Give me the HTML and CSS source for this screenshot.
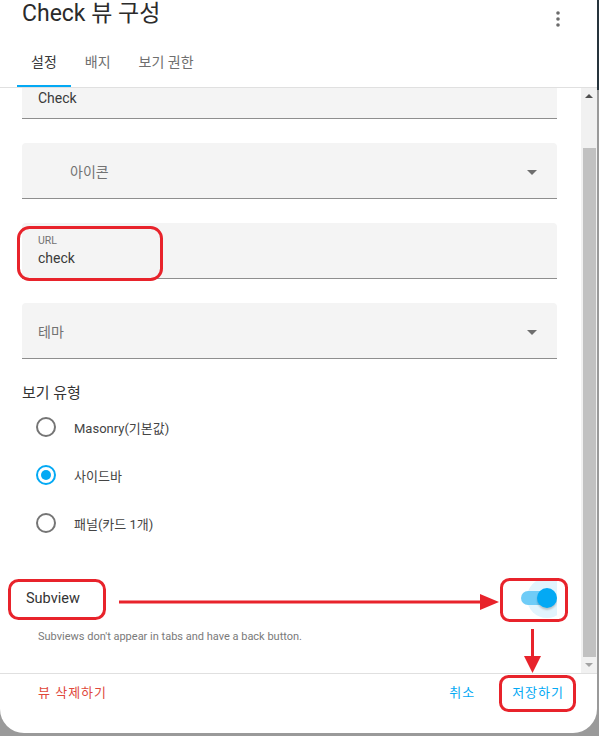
FILE: index.html
```html
<!DOCTYPE html>
<html>
	<head>
		<meta charset="utf-8">
		<title>Check 뷰 구성</title>
		<link rel="stylesheet" href="styles.css">
	</head>
	<body>
		<div class="dialog">
			<div class="head">
				<div class="title-row">
					<h2 class="title">Check 뷰 구성</h2>
					<svg class="menu" width="6" height="18" viewBox="0 0 6 18">
						<circle cx="3" cy="3" r="1.8" />
						<circle cx="3" cy="9" r="1.8" />
						<circle cx="3" cy="15" r="1.8" />
					</svg>
				</div>
				<div class="tabs">
					<div class="tab active">설정</div>
					<div class="tab">배지</div>
					<div class="tab">보기 권한</div>
				</div>
			</div>

			<div class="body">
				<div class="scroll">
					<div class="inner">
						<div class="field labeled first">
							<span class="label"></span>
							<span class="value">Check</span>
						</div>
						<div class="field select with-icon">
							<span class="placeholder">아이콘</span>
							<span class="arrow"></span>
						</div>
						<div class="field labeled">
							<span class="label">URL</span>
							<span class="value">check</span>
						</div>
						<div class="field select">
							<span class="placeholder">테마</span>
							<span class="arrow"></span>
						</div>

						<div class="group-title">보기 유형</div>
						<div class="radios">
							<div class="radio"><span class="ring"></span>Masonry(기본값)</div>
							<div class="radio on"><span class="ring"></span>사이드바</div>
							<div class="radio"><span class="ring"></span>패널(카드 1개)</div>
						</div>

						<div class="sub-row">
							<span class="sub-label">Subview</span>
							<span class="switch"><span class="halo"></span><span class="track"></span><span class="thumb"></span></span>
						</div>
						<div class="helper">Subviews don't appear in tabs and have a back button.</div>
					</div>
				</div>
				<div class="scrollbar">
					<span class="sb-up"></span>
					<div class="sb-track"><div class="sb-thumb"></div></div>
					<span class="sb-down"></span>
				</div>
			</div>

			<div class="foot">
				<a class="btn danger">뷰 삭제하기</a>
				<span class="spacer"></span>
				<a class="btn">취소</a>
				<a class="btn save">저장하기</a>
			</div>

			<!-- red annotation marks -->
			<svg class="marks" width="597" height="733" viewBox="0 0 597 733">
				<g fill="none" stroke="#e8232b" stroke-width="3">
					<rect x="18.5" y="227.5" width="143" height="52" rx="11" />
					<rect x="9.5" y="580.5" width="95" height="38" rx="9" />
					<rect x="501.5" y="579.5" width="65" height="41" rx="8" />
					<rect x="500.5" y="676.5" width="74" height="34" rx="8" />
					<line x1="119" y1="602" x2="484" y2="602" />
					<line x1="532.5" y1="629" x2="532.5" y2="660" />
				</g>
				<g fill="#e8232b">
					<polygon points="480,594 499,602 480,610" />
					<polygon points="524,656 541,656 532.5,673" />
				</g>
			</svg>
		</div>
	</body>
</html>
```

FILE: styles.css
```css
* {margin:0; padding:0; box-sizing:border-box;}

body {background:linear-gradient(to bottom, #26343c 0, #26343c 90px, #9a9a9a 90px); font-family:Roboto, "Noto Sans CJK KR", sans-serif; height:736px; overflow:hidden;}

.dialog {width:597px; height:733px; background:#fff; border-radius:0 0 24px 24px; display:flex; flex-direction:column; position:relative; overflow:hidden;}

/* header */
.head {height:88px; border-bottom:1px solid #e0e0e0; flex:none;}
.title-row {height:40px; display:flex; padding:0 36px 0 22px;}
.title {font-size:23px; font-weight:400; line-height:28px; color:#2b2b2b; flex:1;}
.menu {fill:#6b6b6b; margin-top:10px;}
.tabs {display:flex; height:47px; padding-left:17px;}
.tab {padding:0 14px; font-size:14px; line-height:45px; color:#6f6f6f; border-bottom:2px solid transparent;}
.tab.active {color:#383838; border-bottom-color:#03a9f4;}

/* body */
.body {flex:1; display:flex; min-height:0;}
.scroll {flex:1; overflow:hidden; padding:0 24px 0 22px;}
.inner {overflow:hidden; margin-top:-25px; padding-bottom:30px;}

.field {height:56px; background:#f4f4f4; border-bottom:1px solid #8e8e8e; border-radius:4px 4px 0 0; margin-bottom:24px; padding:0 16px; display:flex; position:relative;}
.field.labeled {flex-direction:column; padding-top:12px;}
.field .label {font-size:10.5px; line-height:12px; height:12px; color:#727272;}
.field .value {font-size:14px; line-height:22px; color:#3a3a3a;}
.field.select {align-items:center; justify-content:space-between; padding-right:20px;}
.field.with-icon {padding-left:48px;}
.placeholder {font-size:14px; color:#727272;}
.arrow {width:0; height:0; border-left:5px solid transparent; border-right:5px solid transparent; border-top:5px solid #6e6e6e; margin-top:3px;}

.group-title {font-size:15px; line-height:20px; color:#333;}
.radios {padding-left:14px; margin-bottom:31px;}
.radio {height:48px; display:flex; align-items:center; font-size:13px; color:#444;}
.ring {width:20px; height:20px; border:2px solid #757575; border-radius:50%; margin-right:18px; display:flex; align-items:center; justify-content:center;}
.radio.on .ring {border-color:#03a9f4;}
.radio.on .ring:after {content:""; width:10px; height:10px; border-radius:50%; background:#03a9f4;}

.sub-row {height:40px; display:flex; align-items:center; justify-content:space-between; padding-left:4px;}
.sub-label {font-size:14.5px; color:#333;}
.switch {width:36px; height:20px; position:relative; display:flex; align-items:center;}
.track {width:33px; height:14px; border-radius:7px; background:#6fccf7; position:relative;}
.halo {position:absolute; width:40px; height:40px; border-radius:50%; background:#e1f4fd; right:-10px; top:-10px;}
.thumb {position:absolute; width:20px; height:20px; border-radius:50%; background:#03a9f4; right:0; top:0; box-shadow:0 2px 2px rgba(0,0,0,0.2);}
.helper {font-size:11px; line-height:16px; color:#7a7a7a; padding:11px 0 0 16px;}

/* fake scrollbar */
.scrollbar {width:16px; background:#f1f1f1; display:flex; flex-direction:column; align-items:center; flex:none;}
.sb-up, .sb-down {height:16px; width:16px; display:flex; align-items:center; justify-content:center;}
.sb-up:after {content:""; border-left:4px solid transparent; border-right:4px solid transparent; border-bottom:4px solid #505050;}
.sb-down:after {content:""; border-left:4px solid transparent; border-right:4px solid transparent; border-top:4px solid #a3a3a3;}
.sb-track {flex:1; width:16px; padding:44px 1px 0 2px;}
.sb-thumb {height:100%; background:#c1c1c1;}

/* footer */
.foot {height:60px; border-top:1px solid #e0e0e0; display:flex; align-items:flex-start; padding:1px 25px 0 30px; flex:none;}
.btn {height:36px; padding:0 8px; font-size:13px; letter-spacing:1px; line-height:36px; color:#03a9f4;}
.btn.danger {color:#e0483b;}
.btn.save {margin-left:21px;}
.spacer {flex:1;}

.marks {position:absolute; left:0; top:0; pointer-events:none;}
```
